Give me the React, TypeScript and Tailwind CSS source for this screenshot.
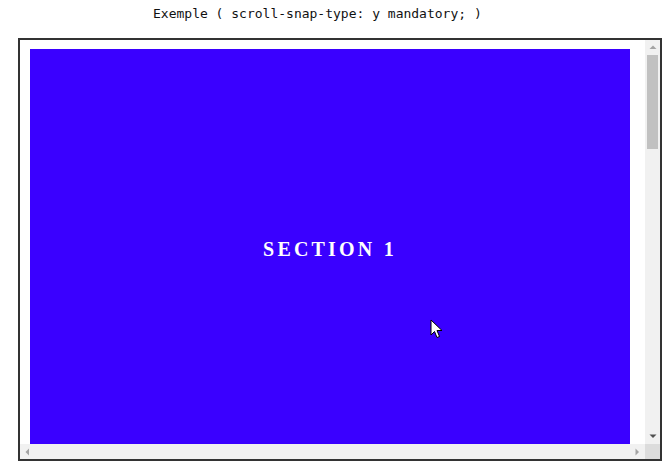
import React from "react";

const sections = [
  { label: "SECTION 1", color: "bg-[#3a00ff]" },
  { label: "SECTION 2", color: "bg-[#ff006a]" },
  { label: "SECTION 3", color: "bg-[#00c27a]" },
  { label: "SECTION 4", color: "bg-[#ff9f00]" },
];

const Arrow: React.FC<{ dir: "up" | "down" | "left" | "right"; color: string }> = ({ dir, color }) => {
  const pts = {
    up: "0.5,5 4,1.5 7.5,5",
    down: "0.5,1.5 4,5 7.5,1.5",
    left: "5,0.5 1.5,4 5,7.5",
    right: "1.5,0.5 5,4 1.5,7.5",
  }[dir];
  const vertical = dir === "up" || dir === "down";
  return (
    <div className="w-[15px] h-[15px] flex items-center justify-center shrink-0">
      <svg width={vertical ? 8 : 7} height={vertical ? 7 : 8} viewBox={vertical ? "0 0 8 7" : "0 0 7 8"}>
        <polygon points={pts} fill={color} />
      </svg>
    </div>
  );
};

const App: React.FC = () => {
  return (
    <div className="relative w-[669px] h-[476px] bg-white overflow-hidden">
      <p className="pl-[153px] pt-[5px] text-[13px] leading-[17px] text-[#111] font-['DejaVu_Sans_Mono',monospace] whitespace-pre">
        Exemple ( scroll-snap-type: y mandatory; )
      </p>

      <div className="ml-[18px] mt-[16px] w-[644px] h-[423px] border-2 border-[#333] flex flex-col">
        <div className="flex flex-1 min-h-0">
          {/* scroll content, only the first section is in view */}
          <div className="flex-1 overflow-hidden pl-[10px] pt-[9px]">
            {sections.map((s, i) => (
              <section
                key={s.label}
                className={`${s.color} w-[600px] h-[400px] flex items-center justify-center`}
              >
                {i === 0 && (
                  <h2 className="text-white text-[20px] font-bold tracking-[0.16em] font-['Liberation_Serif',serif]">
                    {s.label}
                  </h2>
                )}
              </section>
            ))}
          </div>

          {/* vertical scrollbar */}
          <div className="w-[15px] bg-[#f1f1f1] flex flex-col">
            <Arrow dir="up" color="#a3a3a3" />
            <div className="flex-1 px-[2px]">
              <div className="h-[94px] bg-[#c1c1c1]" />
            </div>
            <Arrow dir="down" color="#505050" />
          </div>
        </div>

        {/* horizontal scrollbar */}
        <div className="h-[15px] bg-[#f1f1f1] flex">
          <Arrow dir="left" color="#a3a3a3" />
          <div className="flex-1" />
          <Arrow dir="right" color="#a3a3a3" />
          <div className="w-[15px] h-[15px] bg-[#dcdcdc]" />
        </div>
      </div>

      {/* mouse pointer */}
      <svg
        className="absolute left-[430px] top-[319px]"
        width="13"
        height="20"
        viewBox="0 0 13 20"
      >
        <path
          d="M1 1 L1 16 L4.5 12.5 L7 18.5 L9.5 17.5 L7 11.5 L12 11.5 Z"
          fill="#fff"
          stroke="#000"
          strokeWidth="1"
          strokeLinejoin="round"
        />
      </svg>
    </div>
  );
};

export default App;
